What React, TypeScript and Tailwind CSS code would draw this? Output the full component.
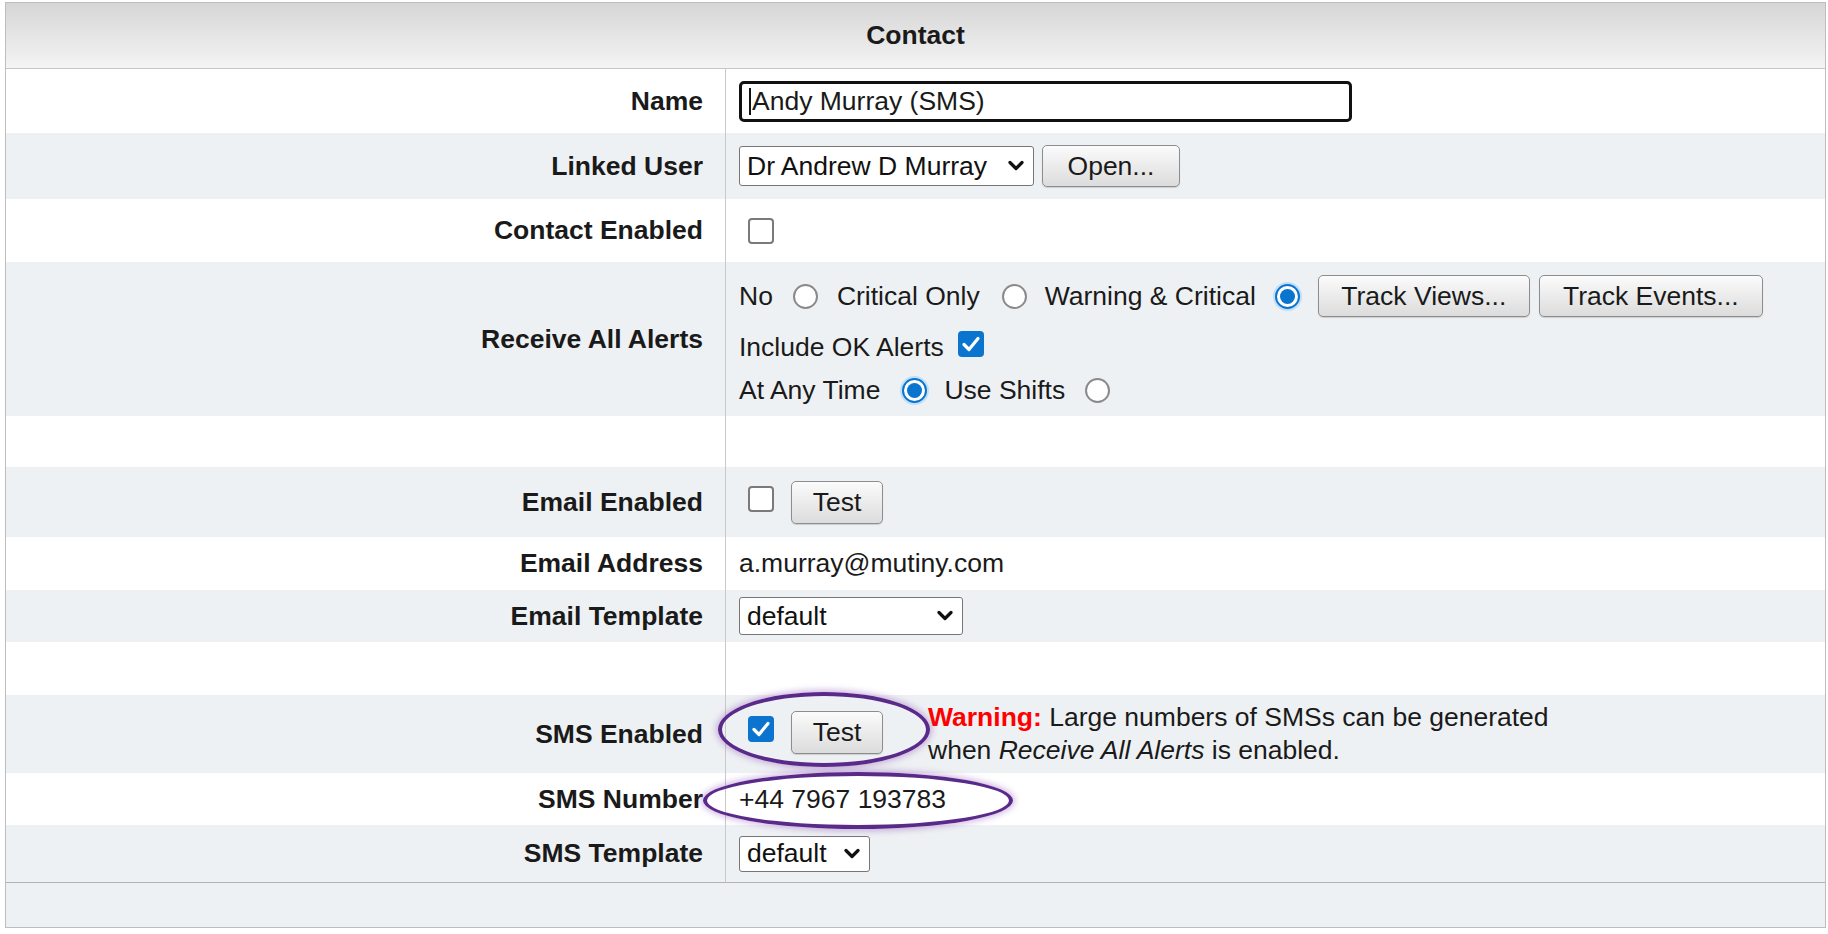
import React from 'react';

const font = { fontFamily: '"Liberation Sans", Arial, sans-serif' };

const Check = () => (
  <svg viewBox="0 0 26 26" className="h-full w-full">
    <path d="M6 13.5 L11 18.5 L20 7.5" fill="none" stroke="#fff" strokeWidth="3.2" strokeLinecap="round" strokeLinejoin="round" />
  </svg>
);

const Checkbox = ({ checked, className = '' }: { checked?: boolean; className?: string }) =>
  checked ? (
    <span className={`inline-block h-[26px] w-[26px] shrink-0 rounded-[4px] bg-[#0a74cf] ${className}`}>
      <Check />
    </span>
  ) : (
    <span className={`inline-block h-[26px] w-[26px] shrink-0 rounded-[4px] border-2 border-[#7a7a7a] bg-white ${className}`} />
  );

const Radio = ({ checked, className = '' }: { checked?: boolean; className?: string }) =>
  checked ? (
    <span className={`flex h-[25px] w-[25px] shrink-0 items-center justify-center rounded-full border-2 border-[#0a74cf] bg-white shadow-[0_0_0_2px_#bfe0f8] ${className}`}>
      <span className="h-[15px] w-[15px] rounded-full bg-[#0a74cf]" />
    </span>
  ) : (
    <span className={`inline-block h-[25px] w-[25px] shrink-0 rounded-full border-2 border-[#8a8a8a] bg-white ${className}`} />
  );

const Button = ({ children, className = '' }: { children: React.ReactNode; className?: string }) => (
  <span
    className={`flex h-[42px] shrink-0 items-center justify-center rounded-[5px] border border-[#8d8d8d] bg-gradient-to-b from-[#fbfbfb] to-[#dcdcdc] text-[#1a1a1a] shadow-[0_1px_1px_rgba(0,0,0,0.15)] ${className}`}
  >
    {children}
  </span>
);

const Chevron = () => (
  <svg viewBox="0 0 16 12" className="h-[12px] w-[16px]">
    <path d="M2 2.5 L8 8.5 L14 2.5" fill="none" stroke="#111" strokeWidth="3.2" strokeLinecap="round" strokeLinejoin="round" />
  </svg>
);

const Select = ({ value, className = '' }: { value: string; className?: string }) => (
  <span className={`flex shrink-0 items-center justify-between rounded-[3px] border border-[#767676] bg-white pl-[7px] pr-[9px] text-[#111] ${className}`}>
    <span>{value}</span>
    <Chevron />
  </span>
);

const Row = ({
  label,
  gray,
  h,
  children,
}: {
  label?: string;
  gray?: boolean;
  h: string;
  children?: React.ReactNode;
}) => (
  <div className={`flex ${h} ${gray ? 'bg-[#eef1f3]' : 'bg-white'}`}>
    <div className="flex w-[720px] shrink-0 items-center justify-end border-r border-[#c9c9c9] pr-[22px] font-bold text-[#1a1a1a]">
      {label}
    </div>
    <div className="flex flex-1 items-center pl-[13px] text-[#1a1a1a]">{children}</div>
  </div>
);

export default function App() {
  return (
    <div className="relative h-[934px] w-[1828px] overflow-hidden bg-white text-[26.5px] leading-none" style={font}>
      <div className="ml-[5px] mt-[2px] w-[1821px] border border-[#bdbdbd]">
        <div className="flex h-[66px] items-center justify-center border-b border-[#c6c6c6] bg-gradient-to-b from-[#d6d6d6] to-[#f4f4f4] font-bold text-[#1a1a1a]">
          Contact
        </div>

        <Row label="Name" h="h-[64px]">
          <span className="flex h-[41px] w-[613px] items-center rounded-[5px] border-[3px] border-[#111] bg-white pl-[7px]">
            <span className="mr-[1px] h-[27px] w-[2px] bg-[#111]" />
            Andy Murray (SMS)
          </span>
        </Row>

        <Row label="Linked User" gray h="h-[66px]">
          <Select value="Dr Andrew D Murray" className="h-[40px] w-[295px]" />
          <Button className="ml-[8px] w-[138px]">Open...</Button>
        </Row>

        <Row label="Contact Enabled" h="h-[63px]">
          <Checkbox className="ml-[9px]" />
        </Row>

        <div className="flex h-[154px] bg-[#eef1f3]">
          <div className="flex w-[720px] shrink-0 items-center justify-end border-r border-[#c9c9c9] pr-[22px] font-bold text-[#1a1a1a]">
            Receive All Alerts
          </div>
          <div className="flex flex-1 flex-col pl-[13px] pt-[13px] text-[#1a1a1a]">
            <div className="flex h-[42px] items-center">
              <span>No</span>
              <Radio className="ml-[20px]" />
              <span className="ml-[19px]">Critical Only</span>
              <Radio className="ml-[22px]" />
              <span className="ml-[18px]">Warning &amp; Critical</span>
              <Radio checked className="ml-[19px]" />
              <Button className="ml-[18px] w-[212px]">Track Views...</Button>
              <Button className="ml-[9px] w-[224px]">Track Events...</Button>
            </div>
            <div className="mt-[10px] flex h-[40px] items-center">
              <span>Include OK Alerts</span>
              <Checkbox checked className="mb-[6px] ml-[14px]" />
            </div>
            <div className="mt-[3px] flex h-[40px] items-center">
              <span>At Any Time</span>
              <Radio checked className="ml-[22px]" />
              <span className="ml-[17px]">Use Shifts</span>
              <Radio className="ml-[20px]" />
            </div>
          </div>
        </div>

        <Row h="h-[51px]" />

        <Row label="Email Enabled" gray h="h-[70px]">
          <Checkbox className="mb-[6px] ml-[9px]" />
          <Button className="ml-[17px] h-[43px] w-[92px]">Test</Button>
        </Row>

        <Row label="Email Address" h="h-[53px]">
          a.murray@mutiny.com
        </Row>

        <Row label="Email Template" gray h="h-[52px]">
          <Select value="default" className="h-[38px] w-[224px]" />
        </Row>

        <Row h="h-[53px]" />

        <Row label="SMS Enabled" gray h="h-[78px]">
          <Checkbox checked className="mb-[10px] ml-[9px]" />
          <Button className="mb-[4px] ml-[17px] h-[43px] w-[92px]">Test</Button>
          <div className="ml-[45px] leading-[33px]">
            <span className="font-bold text-[#ff0000]">Warning:</span> Large numbers of SMSs can be generated
            <br />
            when <i>Receive All Alerts</i> is enabled.
          </div>
        </Row>

        <Row label="SMS Number" h="h-[52px]">
          +44 7967 193783
        </Row>

        <Row label="SMS Template" gray h="h-[57px]">
          <Select value="default" className="h-[36px] w-[131px]" />
        </Row>

        <div className="h-[45px] border-t border-[#b3b3b3] bg-[#eef1f3]" />
      </div>

      <div className="pointer-events-none absolute left-[718px] top-[692px] h-[75px] w-[212px] rounded-[50%] border-[4px] border-[#5a2a8a] shadow-[0_0_6px_2px_rgba(150,90,190,0.45)]" />
      <div className="pointer-events-none absolute left-[703px] top-[772px] h-[57px] w-[310px] rounded-[50%] border-[4px] border-[#5a2a8a] shadow-[0_0_6px_2px_rgba(150,90,190,0.45)]" />
    </div>
  );
}
